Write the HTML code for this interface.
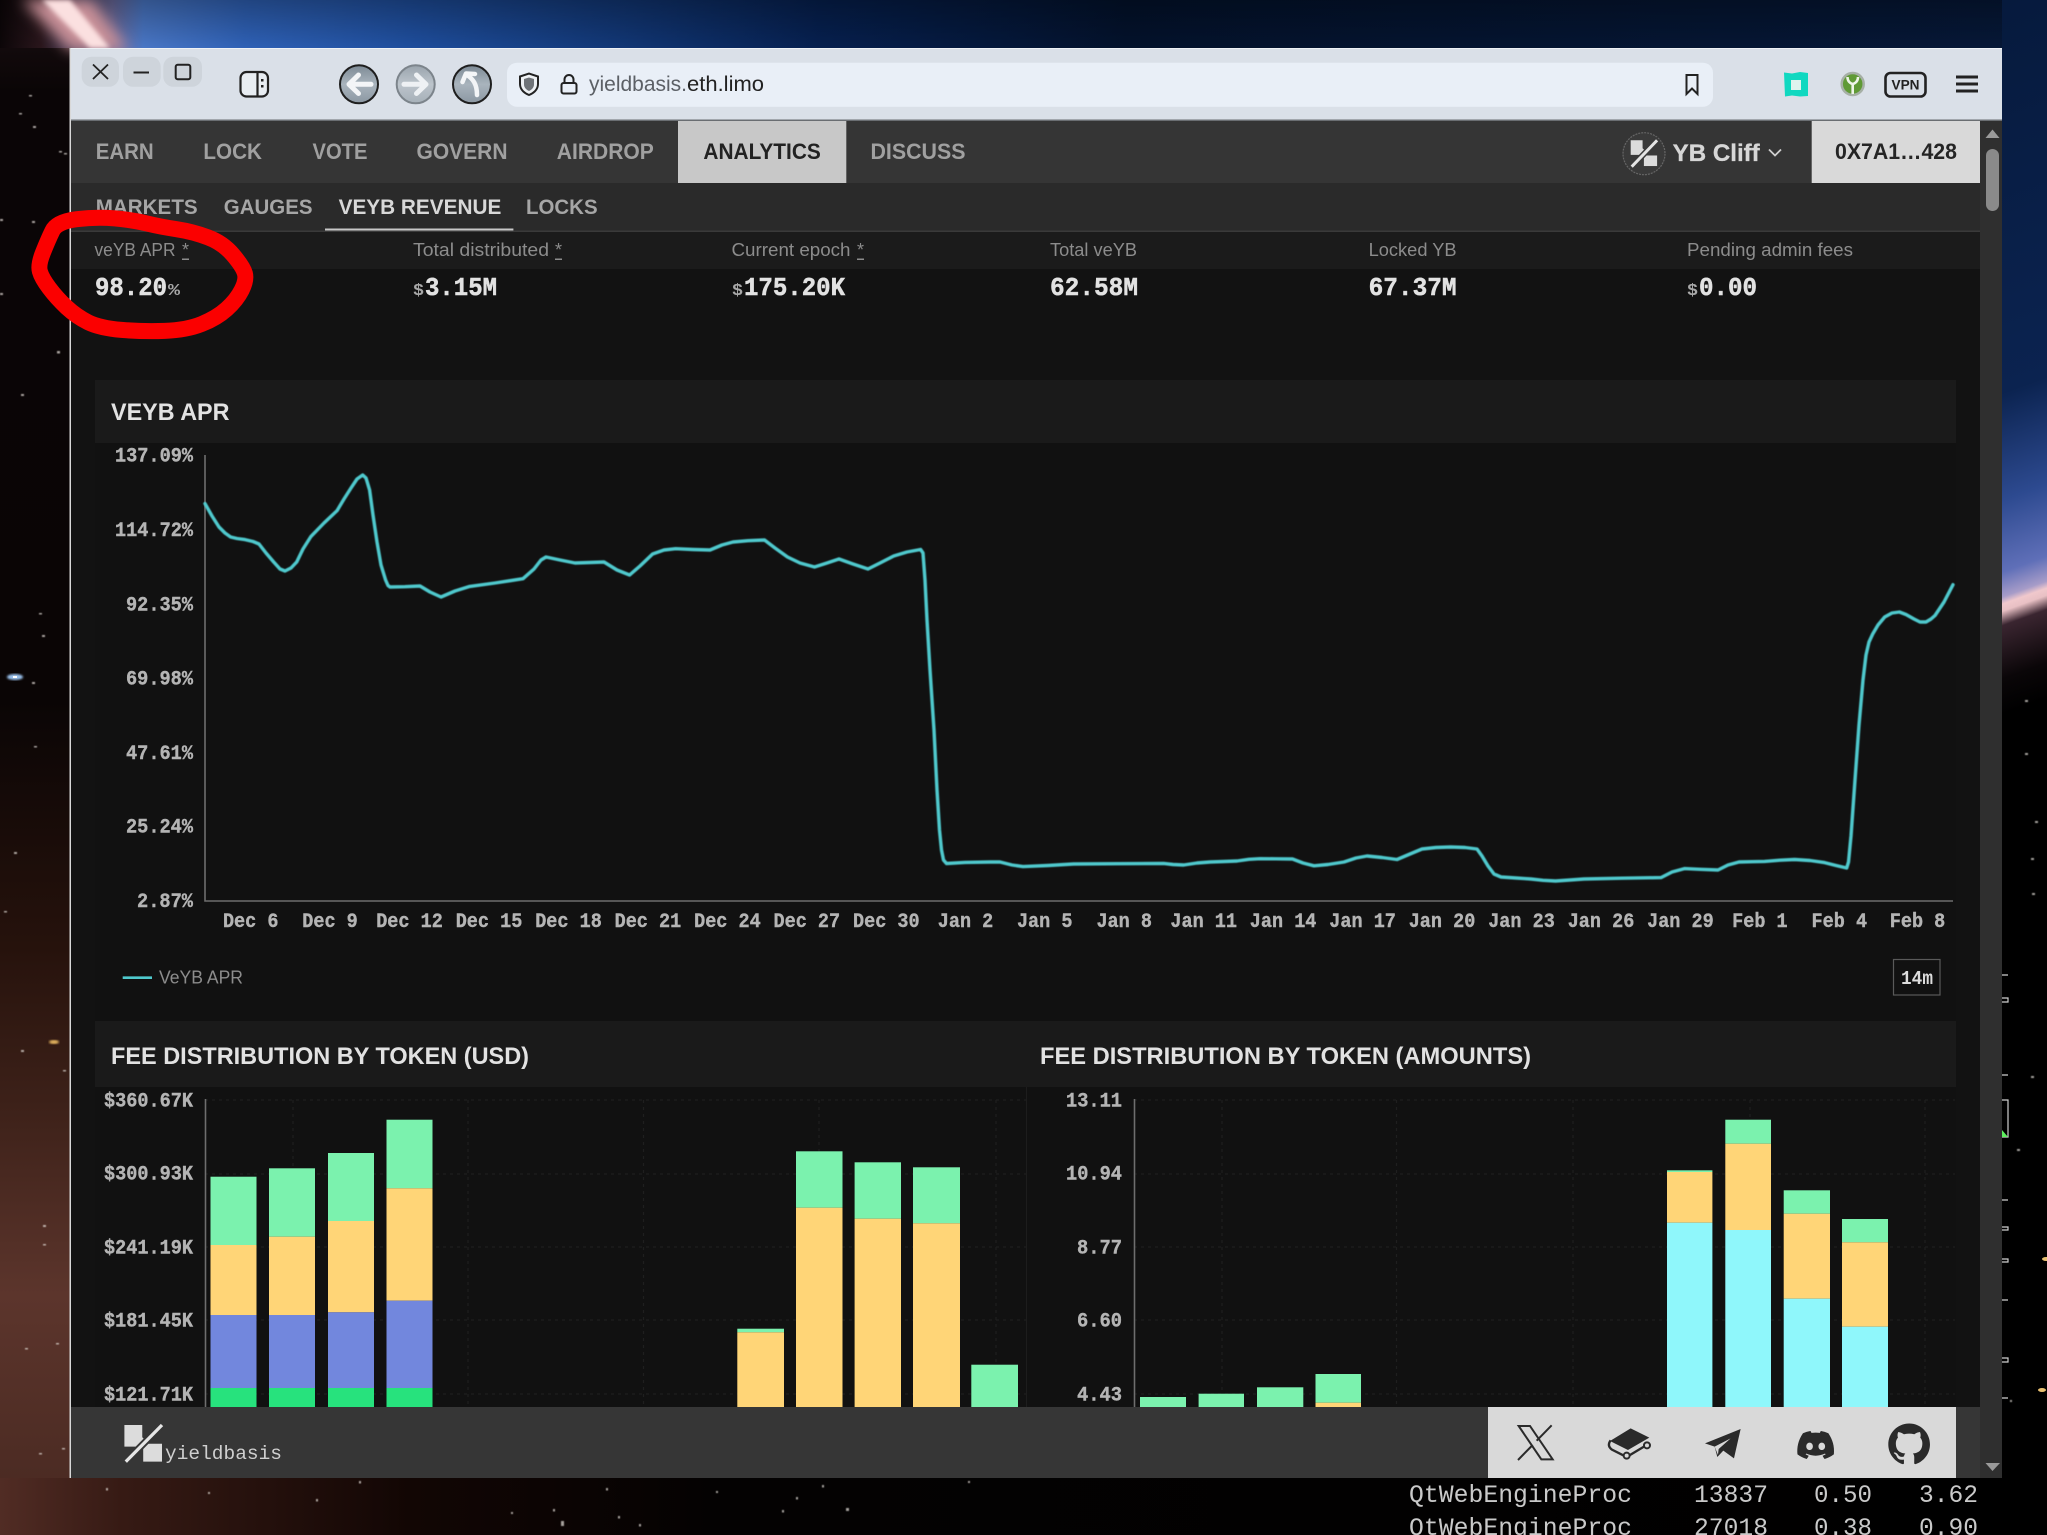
<!DOCTYPE html>
<html><head><meta charset="utf-8"><style>
html,body{margin:0;padding:0;background:#000;width:2047px;height:1535px;overflow:hidden}
svg{display:block;position:absolute;left:0;top:0}
text{white-space:pre}
.s{font-family:"Liberation Sans",sans-serif}
.m{font-family:"Liberation Mono",monospace}
.nav{font-family:"Liberation Sans",sans-serif;font-weight:700;font-size:22px;fill:#a0a0a0}
.sub{font-family:"Liberation Sans",sans-serif;font-weight:700;font-size:21px;fill:#a6a6a6}
.lab{font-family:"Liberation Sans",sans-serif;font-size:18px;fill:#8c8c8c}
.val{font-family:"Liberation Mono",monospace;font-weight:700;font-size:26px;fill:#e2e2e2;stroke:#e2e2e2;stroke-width:.5}
.sm{font-family:"Liberation Mono",monospace;font-weight:700;font-size:17px;fill:#a8a8a8}
.ax{font-family:"Liberation Mono",monospace;font-weight:700;font-size:20.5px;fill:#b4b4b4;stroke:#b4b4b4;stroke-width:.4}
.tt{font-family:"Liberation Sans",sans-serif;font-weight:700;font-size:24px;fill:#e2e2e2}
.tm{font-family:"Liberation Mono",monospace;font-size:25px;fill:#c9c9c9}
</style></head><body>
<svg width="2047" height="1535" viewBox="0 0 2047 1535" xmlns="http://www.w3.org/2000/svg">
<defs>
<linearGradient id="top" x1="0" x2="1" y1="0" y2="0">
<stop offset="0" stop-color="#0c0608"/><stop offset=".02" stop-color="#2a161c"/><stop offset=".055" stop-color="#6a6a9c"/><stop offset=".07" stop-color="#4a78c8"/><stop offset=".12" stop-color="#2f62b8"/><stop offset=".2" stop-color="#1f4f9f"/><stop offset=".3" stop-color="#123878"/><stop offset=".4" stop-color="#062050"/><stop offset=".55" stop-color="#03122c"/><stop offset="1" stop-color="#061838"/>
</linearGradient>
<linearGradient id="topv" x1="0" x2="0" y1="0" y2="1"><stop offset="0" stop-color="#000" stop-opacity=".3"/><stop offset="1" stop-color="#000" stop-opacity="0"/></linearGradient>
<linearGradient id="rs" gradientUnits="userSpaceOnUse" x1="2002" y1="0" x2="2230" y2="633">
<stop offset="0" stop-color="#061a3d"/><stop offset=".55" stop-color="#0b2350"/><stop offset=".7" stop-color="#2d4a90"/><stop offset=".8" stop-color="#5f6fb8"/><stop offset=".835" stop-color="#a79cc8"/><stop offset=".845" stop-color="#f0c8cc"/><stop offset=".855" stop-color="#e8c0c4"/><stop offset=".875" stop-color="#3a2530"/><stop offset=".95" stop-color="#0a0608"/><stop offset="1" stop-color="#000"/>
</linearGradient>
<linearGradient id="ls" x1="0" x2="0" y1="0" y2="1">
<stop offset="0" stop-color="#120a0c"/><stop offset=".03" stop-color="#0a0506"/><stop offset=".45" stop-color="#0a0505"/><stop offset=".62" stop-color="#26120c"/><stop offset=".73" stop-color="#3d2119"/><stop offset=".86" stop-color="#5c352c"/><stop offset="1" stop-color="#4a2a22"/>
</linearGradient>
<linearGradient id="bs" x1="0" x2="1" y1="0" y2="0">
<stop offset="0" stop-color="#512c24"/><stop offset=".06" stop-color="#361a14"/><stop offset=".2" stop-color="#120604"/><stop offset=".35" stop-color="#040202"/><stop offset="1" stop-color="#000"/>
</linearGradient>
<linearGradient id="btn" x1="0" x2="0" y1="0" y2="1"><stop offset="0" stop-color="#7d8a95"/><stop offset=".5" stop-color="#a9b4bd"/><stop offset="1" stop-color="#8b97a2"/></linearGradient>
<linearGradient id="btn2" x1="0" x2="0" y1="0" y2="1"><stop offset="0" stop-color="#9aa4ad"/><stop offset=".5" stop-color="#bcc4cb"/><stop offset="1" stop-color="#a6b0b8"/></linearGradient>
<filter id="b2" x="-50%" y="-50%" width="200%" height="200%"><feGaussianBlur stdDeviation="2.5"/></filter>
<filter id="b1"><feGaussianBlur stdDeviation="1"/></filter>
<filter id="b05" x="-1%" y="-1%" width="102%" height="102%"><feGaussianBlur stdDeviation=".6"/></filter>
<filter id="b6" x="-50%" y="-50%" width="200%" height="200%"><feGaussianBlur stdDeviation="7"/></filter>
<filter id="b04" x="-2%" y="-2%" width="104%" height="104%"><feGaussianBlur stdDeviation=".5"/></filter>
</defs>

<!-- wallpaper -->
<rect width="2047" height="1535" fill="#000"/>
<rect x="0" y="0" width="2047" height="50" fill="url(#top)"/>
<rect x="0" y="0" width="2047" height="50" fill="url(#topv)"/>
<rect x="0" y="48" width="72" height="1450" fill="url(#ls)"/>
<rect x="0" y="1478" width="2047" height="57" fill="url(#bs)"/>
<rect x="2002" y="0" width="45" height="720" fill="url(#rs)"/>
<polygon points="22,0 92,0 128,50 70,50" fill="#c89098" filter="url(#b6)"/>
<polygon points="42,0 70,0 110,48 90,48" fill="#fbe0e0" filter="url(#b2)"/>
<g fill="#e8e4de" opacity=".7" filter="url(#b05)">
<rect x="19" y="113" width="3" height="1.5"/><rect x="33" y="126" width="3" height="2"/><rect x="29" y="95" width="3" height="1.5"/><rect x="59" y="151" width="3" height="1.5"/><rect x="64" y="153" width="3" height="1.5"/><rect x="32" y="221" width="3" height="2"/><rect x="0" y="219" width="3" height="2"/><rect x="57" y="351" width="3" height="2.5"/><rect x="21" y="394" width="3" height="2"/><rect x="0" y="293" width="3" height="2"/><rect x="39" y="613" width="3" height="1.5"/><rect x="42" y="635" width="3" height="2"/><rect x="32" y="682" width="3" height="2"/><rect x="34" y="746" width="3" height="1.5"/><rect x="14" y="852" width="3" height="2"/><rect x="4" y="911" width="3" height="1.5"/><rect x="21" y="1050" width="3" height="2"/><rect x="63" y="1070" width="3" height="1.5"/><rect x="43" y="1225" width="3" height="2"/><rect x="43" y="1244" width="3" height="1.5"/><rect x="25" y="1348" width="3" height="1.5"/><rect x="56" y="1343" width="3" height="1.5"/><rect x="39" y="1453" width="3" height="1.5"/><rect x="62" y="1448" width="3" height="1.5"/>
<rect x="359" y="1481" width="2" height="2.5"/><rect x="106" y="1488" width="2" height="2.5"/><rect x="208" y="1492" width="2" height="2"/><rect x="316" y="1499" width="2" height="2.5"/><rect x="606" y="1488" width="2" height="2.5"/><rect x="822" y="1485" width="2" height="2.5"/><rect x="796" y="1497" width="2" height="2.5"/><rect x="968" y="1481" width="2" height="2"/><rect x="553" y="1509" width="2" height="2.5"/><rect x="511" y="1512" width="2" height="2"/><rect x="561" y="1521" width="3" height="5"/><rect x="618" y="1516" width="2" height="2.5"/><rect x="639" y="1524" width="2" height="2.5"/><rect x="782" y="1510" width="2" height="2.5"/><rect x="846" y="1508" width="3" height="3"/><rect x="716" y="1491" width="2" height="2"/>
<rect x="2025" y="700" width="3" height="2"/><rect x="2025" y="753" width="3" height="2"/><rect x="2035" y="821" width="3" height="2"/><rect x="2031" y="858" width="3" height="2"/><rect x="2032" y="893" width="3" height="2"/><rect x="2041" y="1389" width="3" height="2"/><rect x="2044" y="1258" width="3" height="2"/><rect x="2031" y="1076" width="3" height="2"/><rect x="2017" y="1149" width="3" height="2"/><rect x="2010" y="1400" width="2" height="2"/>
</g>
<ellipse cx="15" cy="677" rx="8" ry="3" fill="#9cc4f0" filter="url(#b1)"/><rect x="13" y="676" width="4" height="2" fill="#fff"/>
<ellipse cx="54" cy="1042" rx="5" ry="2" fill="#e8b860" filter="url(#b1)"/>
<ellipse cx="2046" cy="1259" rx="4" ry="2" fill="#e8c070"/>
<ellipse cx="2042" cy="1390" rx="4" ry="2" fill="#e8c070"/>
<!-- side widget marks -->
<g stroke="#cfcfcf" stroke-width="1.2" fill="none">
<path d="M2002 975h6M2002 1075h6M2002 1200h6M2002 1300h6M2002 1398h6"/>
<path d="M2002 998h6v4h-6M2002 1227h6v3h-6M2002 1259h6v3h-6M2002 1358h6v4h-6"/>
<path d="M2002 1100h6v37h-6"/>
</g>
<polygon points="2002,1130 2008,1137 2002,1137" fill="#5ef05e"/>

<!-- window -->
<rect x="69.5" y="48" width="1.5" height="1430" fill="#d8d8d8"/>
<rect x="71" y="48" width="1931" height="73" fill="#dae0e8"/>
<rect x="71" y="119.5" width="1931" height="2" fill="#6a6e72"/>
<rect x="71" y="48" width="1931" height="1" fill="#eef1f5"/>

<!-- window controls -->
<rect x="81.7" y="56.7" width="37.3" height="30" rx="10" fill="#ced4db"/>
<rect x="123" y="56.7" width="37.7" height="30" rx="10" fill="#ced4db"/>
<rect x="163.3" y="56.7" width="38.7" height="30" rx="10" fill="#ced4db"/>
<path d="M93 64.5L108 79M108 64.5L93 79" stroke="#222" stroke-width="1.8" fill="none"/>
<path d="M133.5 72.5H149" stroke="#222" stroke-width="2" fill="none"/>
<rect x="175.7" y="64.7" width="14.6" height="14.6" rx="2" stroke="#222" stroke-width="2" fill="none"/>
<!-- sidebar icon -->
<rect x="240.5" y="72" width="27.5" height="24.5" rx="6" stroke="#222" stroke-width="2.2" fill="#e8edf2"/>
<path d="M257.5 72V96.5" stroke="#222" stroke-width="2.2"/>
<rect x="261" y="79" width="2.5" height="2.5" fill="#222"/><rect x="261" y="85" width="2.5" height="2.5" fill="#222"/>
<!-- nav buttons -->
<circle cx="359" cy="84.3" r="19" fill="url(#btn)" stroke="#1e1e1e" stroke-width="2"/>
<path d="M371 84.3H351M358.5 75L349 84.3L358.5 93.5" stroke="#f3f5f7" stroke-width="5" stroke-linecap="round" stroke-linejoin="round" fill="none"/>
<circle cx="415.7" cy="84.3" r="19" fill="url(#btn2)" stroke="#7c848b" stroke-width="2"/>
<path d="M404 84.3H424M416.5 75L426 84.3L416.5 93.5" stroke="#eef1f4" stroke-width="5" stroke-linecap="round" stroke-linejoin="round" fill="none"/>
<circle cx="472" cy="84.3" r="19" fill="url(#btn)" stroke="#1e1e1e" stroke-width="2"/>
<path d="M477 95C477 84 473 79 467 75M462.5 82L466 73.5L475 74" stroke="#f3f5f7" stroke-width="4.5" stroke-linecap="round" stroke-linejoin="round" fill="none"/>
<!-- url bar -->
<rect x="507" y="62.7" width="1206" height="44" rx="10" fill="#e9eff7"/>
<path d="M520 76.5L529 73.5L538 76.5V84C538 90 533 93.5 529 95C525 93.5 520 90 520 84Z" fill="#eef1f4" stroke="#222" stroke-width="2"/>
<path d="M524 79L529 77.5L534 79V84.5C534 87.5 531.5 90 529 91C526.5 90 524 87.5 524 84.5Z" fill="#6f7378"/>
<rect x="561.5" y="83" width="15" height="10.5" rx="2" fill="none" stroke="#222" stroke-width="2"/>
<path d="M564.5 83V79.5a4.5 4.5 0 0 1 9 0V83" fill="none" stroke="#222" stroke-width="2"/>
<text class="s" x="589" y="91" font-size="21" fill="#5c6066" textLength="98" lengthAdjust="spacingAndGlyphs">yieldbasis.</text>
<text class="s" x="687" y="91" font-size="21" fill="#222" textLength="77" lengthAdjust="spacingAndGlyphs">eth.limo</text>
<path d="M1686.5 75H1697.5V94L1692 88.5L1686.5 94Z" fill="none" stroke="#222" stroke-width="2"/>
<!-- extensions -->
<path d="M1784 72.5L1792 73.5L1800 72L1808 73V96L1800 96.5L1792 95.5L1785 96.5Z" fill="#10d8c0"/>
<rect x="1791" y="80" width="10" height="10" fill="#dff3ee"/>
<circle cx="1852.7" cy="84" r="11" fill="#5f9a35" stroke="#a6b0a6" stroke-width="2.5"/>
<path d="M1852.7 94V84M1847.5 77C1847.5 83 1852.7 84 1852.7 84C1852.7 84 1858 83 1858 77" stroke="#eef5e8" stroke-width="2.6" fill="none"/>
<rect x="1885.5" y="73" width="40" height="23.5" rx="5" fill="none" stroke="#222" stroke-width="2.6"/>
<text class="s" x="1905.5" y="89.5" font-size="13.5" font-weight="700" fill="#222" text-anchor="middle" textLength="28" lengthAdjust="spacingAndGlyphs">VPN</text>
<path d="M1956 77H1978M1956 84H1978M1956 91H1978" stroke="#222" stroke-width="3"/>

<!-- site -->
<rect x="71" y="121" width="1909" height="1357" fill="#121212"/>
<rect x="71" y="121" width="1909" height="62" fill="#353535"/>
<rect x="71" y="183" width="1909" height="48" fill="#2a2a2a"/>
<rect x="71" y="231" width="1909" height="38" fill="#1b1b1b"/>
<rect x="71" y="230.5" width="1909" height="1.5" fill="#3a3a3a"/>
<rect x="678" y="121" width="168.3" height="62" fill="#c8c8c8"/>
<rect x="1811.7" y="121" width="169" height="62" fill="#d9d9d9"/>
<!-- scrollbar -->
<rect x="1980" y="121" width="22" height="1357" fill="#2f2f2f"/>
<rect x="1986" y="149" width="13" height="62" rx="6.5" fill="#8a8a8a"/>
<polygon points="1992.5,129.5 1985.5,138 1999.5,138" fill="#9a9a9a"/>
<polygon points="1992.5,1471 1985.5,1463 2000,1463" fill="#9a9a9a"/>

<text class="nav" x="95.7" y="159" textLength="58" lengthAdjust="spacingAndGlyphs">EARN</text>
<text class="nav" x="203.4" y="159" textLength="58.5" lengthAdjust="spacingAndGlyphs">LOCK</text>
<text class="nav" x="312.5" y="159" textLength="55" lengthAdjust="spacingAndGlyphs">VOTE</text>
<text class="nav" x="416.5" y="159" textLength="91" lengthAdjust="spacingAndGlyphs">GOVERN</text>
<text class="nav" x="556.8" y="159" textLength="97" lengthAdjust="spacingAndGlyphs">AIRDROP</text>
<text class="nav" x="703.4" y="159" textLength="117.4" lengthAdjust="spacingAndGlyphs" style="fill:#222">ANALYTICS</text>
<text class="nav" x="870.5" y="159" textLength="95" lengthAdjust="spacingAndGlyphs">DISCUSS</text>

<text class="sub" x="95.7" y="214" textLength="102" lengthAdjust="spacingAndGlyphs">MARKETS</text>
<text class="sub" x="223.8" y="214" textLength="88.7" lengthAdjust="spacingAndGlyphs">GAUGES</text>
<text class="sub" x="338.6" y="214" textLength="162.7" lengthAdjust="spacingAndGlyphs" style="fill:#d8d8d8">VEYB REVENUE</text>
<text class="sub" x="526" y="214" textLength="71.6" lengthAdjust="spacingAndGlyphs">LOCKS</text>
<rect x="325" y="228.5" width="188.4" height="2" fill="#c8c8c8"/>

<!-- header right -->
<circle cx="1644" cy="153.7" r="21" fill="#3a3a3a" stroke="#666" stroke-width="1.2" stroke-dasharray="2 1"/>
<g transform="translate(1630.7,140.3) scale(.33)" fill="#dcdcdc">
<path d="M0 0H36V24L48 36L40 44H0Z"/><path d="M40 46H80V78H40Z"/><path d="M84 -4L-1 84" stroke="#3a3a3a" stroke-width="18" fill="none"/><path d="M80 0L3 80" stroke="#e4e4e4" stroke-width="9" fill="none"/>
</g>
<text class="s" x="1672.7" y="161" font-size="24" font-weight="700" fill="#d6d6d6" stroke="#d6d6d6" stroke-width=".3" textLength="87" lengthAdjust="spacingAndGlyphs">YB Cliff</text>
<path d="M1769 149.5L1775 155.5L1781 149.5" stroke="#cfcfcf" stroke-width="1.8" fill="none"/>
<text class="s" x="1835" y="159" font-size="22.5" font-weight="700" fill="#252525" textLength="122" lengthAdjust="spacingAndGlyphs">0X7A1…428</text>

<!-- stats -->
<text class="lab" x="94.5" y="256" textLength="81" lengthAdjust="spacingAndGlyphs">veYB APR</text>
<text class="lab" x="182" y="256">*</text><rect x="182" y="258.5" width="7" height="1.5" fill="#8c8c8c"/>
<text class="lab" x="413" y="256" textLength="136" lengthAdjust="spacingAndGlyphs">Total distributed</text>
<text class="lab" x="555" y="256">*</text><rect x="555" y="258.5" width="7" height="1.5" fill="#8c8c8c"/>
<text class="lab" x="731.5" y="256" textLength="119" lengthAdjust="spacingAndGlyphs">Current epoch</text>
<text class="lab" x="857" y="256">*</text><rect x="857" y="258.5" width="7" height="1.5" fill="#8c8c8c"/>
<text class="lab" x="1050" y="256" textLength="87" lengthAdjust="spacingAndGlyphs">Total veYB</text>
<text class="lab" x="1368.6" y="256" textLength="88" lengthAdjust="spacingAndGlyphs">Locked YB</text>
<text class="lab" x="1687" y="256" textLength="166" lengthAdjust="spacingAndGlyphs">Pending admin fees</text>

<text class="val" x="95" y="295" textLength="72" lengthAdjust="spacingAndGlyphs">98.20</text><text class="sm" x="168" y="295" textLength="12" lengthAdjust="spacingAndGlyphs">%</text>
<text class="sm" x="413" y="295" textLength="11" lengthAdjust="spacingAndGlyphs">$</text><text class="val" x="425" y="295" textLength="72" lengthAdjust="spacingAndGlyphs">3.15M</text>
<text class="sm" x="732" y="295" textLength="11" lengthAdjust="spacingAndGlyphs">$</text><text class="val" x="744" y="295" textLength="101" lengthAdjust="spacingAndGlyphs">175.20K</text>
<text class="val" x="1050" y="295" textLength="88" lengthAdjust="spacingAndGlyphs">62.58M</text>
<text class="val" x="1368.6" y="295" textLength="88" lengthAdjust="spacingAndGlyphs">67.37M</text>
<text class="sm" x="1687" y="295" textLength="11" lengthAdjust="spacingAndGlyphs">$</text><text class="val" x="1699" y="295" textLength="58" lengthAdjust="spacingAndGlyphs">0.00</text>

<!-- section 1 -->
<rect x="95" y="380" width="1861" height="63" fill="#1a1a1a"/>
<rect x="95" y="443" width="1861" height="578" fill="#111"/>
<text class="tt" x="111" y="420" textLength="118.5" lengthAdjust="spacingAndGlyphs">VEYB APR</text>
<path d="M205 455V901H1953" stroke="#6e6e6e" stroke-width="1.6" fill="none"/>
<g class="ax" text-anchor="end">
<text x="193" y="461.6" textLength="78" lengthAdjust="spacingAndGlyphs">137.09%</text>
<text x="193" y="536" textLength="78" lengthAdjust="spacingAndGlyphs">114.72%</text>
<text x="193" y="610.4" textLength="67" lengthAdjust="spacingAndGlyphs">92.35%</text>
<text x="193" y="684.7" textLength="67" lengthAdjust="spacingAndGlyphs">69.98%</text>
<text x="193" y="759" textLength="67" lengthAdjust="spacingAndGlyphs">47.61%</text>
<text x="193" y="832.4" textLength="67" lengthAdjust="spacingAndGlyphs">25.24%</text>
<text x="193" y="907" textLength="56" lengthAdjust="spacingAndGlyphs">2.87%</text>
</g>
<g class="ax" text-anchor="middle">
<text x="250.7" y="927" textLength="55.5" lengthAdjust="spacingAndGlyphs">Dec 6</text>
<text x="330" y="927" textLength="55.5" lengthAdjust="spacingAndGlyphs">Dec 9</text>
<text x="409.5" y="927" textLength="66.6" lengthAdjust="spacingAndGlyphs">Dec 12</text>
<text x="489" y="927" textLength="66.6" lengthAdjust="spacingAndGlyphs">Dec 15</text>
<text x="568.5" y="927" textLength="66.6" lengthAdjust="spacingAndGlyphs">Dec 18</text>
<text x="647.9" y="927" textLength="66.6" lengthAdjust="spacingAndGlyphs">Dec 21</text>
<text x="727.4" y="927" textLength="66.6" lengthAdjust="spacingAndGlyphs">Dec 24</text>
<text x="806.8" y="927" textLength="66.6" lengthAdjust="spacingAndGlyphs">Dec 27</text>
<text x="886.3" y="927" textLength="66.6" lengthAdjust="spacingAndGlyphs">Dec 30</text>
<text x="965.5" y="927" textLength="55.5" lengthAdjust="spacingAndGlyphs">Jan 2</text>
<text x="1044.7" y="927" textLength="55.5" lengthAdjust="spacingAndGlyphs">Jan 5</text>
<text x="1124.2" y="927" textLength="55.5" lengthAdjust="spacingAndGlyphs">Jan 8</text>
<text x="1203.7" y="927" textLength="66.6" lengthAdjust="spacingAndGlyphs">Jan 11</text>
<text x="1283.1" y="927" textLength="66.6" lengthAdjust="spacingAndGlyphs">Jan 14</text>
<text x="1362.6" y="927" textLength="66.6" lengthAdjust="spacingAndGlyphs">Jan 17</text>
<text x="1442" y="927" textLength="66.6" lengthAdjust="spacingAndGlyphs">Jan 20</text>
<text x="1521.5" y="927" textLength="66.6" lengthAdjust="spacingAndGlyphs">Jan 23</text>
<text x="1601" y="927" textLength="66.6" lengthAdjust="spacingAndGlyphs">Jan 26</text>
<text x="1680.4" y="927" textLength="66.6" lengthAdjust="spacingAndGlyphs">Jan 29</text>
<text x="1759.9" y="927" textLength="55.5" lengthAdjust="spacingAndGlyphs">Feb 1</text>
<text x="1839.3" y="927" textLength="55.5" lengthAdjust="spacingAndGlyphs">Feb 4</text>
<text x="1917.5" y="927" textLength="55.5" lengthAdjust="spacingAndGlyphs">Feb 8</text>
</g>
<polyline filter="url(#b04)" fill="none" stroke="#4fc9cd" stroke-width="3.4" stroke-linejoin="round" stroke-linecap="round" points="205,503.6 212,516 219,527 225,533 230.6,537 237,538.5 245,539.6 253,541.5 259,544 266,553 273.7,562 280,569 285,571 291,568 296.7,562 303,549 311,536.4 324,523 337,510.7 344,499 351,488 357,479 362.7,475 366,478 369.6,490 373,515 377,542 381,565 385.6,580 388,585.5 390,587 405,586.7 420,586 430,592 441,597 455,591 469,586.6 495,583 523,578.7 534,569 541,560 546,557 560,560 575,563 590,562.5 604,562 617,570 629.6,575 640,566 652.6,554 664,550 675.6,548.7 693,549.5 710,550 722,545 733,542 748,540.7 764.5,540 775,548 787.5,557 800,563 814.5,567 827,563 839,559 853,564 868,569 880,563 893.7,556 907,552 920.6,549.5 923,553 925,580 927,620 930,670 934,730 937,790 939.5,830 941.5,850 943.5,860 946.5,863.5 965,862.4 990,862 1000,862 1012,865 1023,866.6 1048,865.5 1073.5,864 1118,863.7 1163.6,863.4 1173,864.5 1183.6,865 1197,863 1210,862 1224,861.5 1237,861 1249,859.3 1260,858.7 1276,858.8 1292.5,859 1303,863 1314,865.8 1328,864.5 1344,862 1356,858 1367,856 1382,857.5 1397,859.5 1410,854 1422,849 1436,847.5 1450.7,847 1465,847.5 1477,849 1482,856 1488,866 1494,874 1501,877 1516,878 1531,879 1543,880.3 1555.5,881 1570,880 1584,879 1622,878.2 1661,877.6 1672,872 1684.4,868.6 1700,869.3 1718,870 1728,865 1739,862 1752,861.7 1764.6,861.4 1780,860.2 1794.6,859.5 1810,860.5 1824.6,862.6 1836,865.5 1846.7,868 1848.5,862 1851,836 1855,780 1859,725 1863,680 1866,655 1869,642 1872.7,634 1878,625 1884.7,617 1892,613 1899.4,612 1906,614.5 1914,619 1920,622 1926,622 1931,619 1935,615.5 1944,602 1953,584.7"/>
<path d="M122.7 977.7H152" stroke="#4fc9cd" stroke-width="2.6"/>
<text class="lab" x="159" y="983.6" textLength="84" lengthAdjust="spacingAndGlyphs">VeYB APR</text>
<rect x="1893.5" y="959.5" width="46.5" height="35.5" fill="none" stroke="#5a5a5a" stroke-width="1.2"/>
<text class="m" x="1901" y="984" font-size="19" font-weight="700" fill="#dcdcdc" textLength="32" lengthAdjust="spacingAndGlyphs">14m</text>

<!-- section 2 -->
<rect x="95" y="1021" width="1861" height="66" fill="#1a1a1a"/>
<rect x="95" y="1087" width="1861" height="320" fill="#111"/>
<rect x="1026" y="1087" width="1" height="320" fill="#1d1d1d"/>
<text class="tt" x="111" y="1064" textLength="418" lengthAdjust="spacingAndGlyphs">FEE DISTRIBUTION BY TOKEN (USD)</text>
<text class="tt" x="1040" y="1064" textLength="491" lengthAdjust="spacingAndGlyphs">FEE DISTRIBUTION BY TOKEN (AMOUNTS)</text>
<g stroke="#1f1f1f" stroke-width="1.2" stroke-dasharray="3 4" fill="none">
<path d="M205 1100H1026M205 1174H1026M205 1247H1026M205 1320H1026M205 1394H1026"/>
<path d="M1134 1100H1955M1134 1174H1955M1134 1247H1955M1134 1320H1955M1134 1394H1955"/>
<path d="M293 1100V1407M468 1100V1407M643.5 1100V1407M819 1100V1407M996 1100V1407"/>
<path d="M1222 1100V1407M1396.5 1100V1407M1573 1100V1407M1750 1100V1407M1925 1100V1407"/>
</g>
<path d="M205.5 1099V1407" stroke="#6e6e6e" stroke-width="1.6"/>
<path d="M1134.5 1099V1407" stroke="#6e6e6e" stroke-width="1.6"/>
<g class="ax" text-anchor="end">
<text x="193" y="1106.7" textLength="89" lengthAdjust="spacingAndGlyphs">$360.67K</text>
<text x="193" y="1179.7" textLength="89" lengthAdjust="spacingAndGlyphs">$300.93K</text>
<text x="193" y="1253.7" textLength="89" lengthAdjust="spacingAndGlyphs">$241.19K</text>
<text x="193" y="1326.7" textLength="89" lengthAdjust="spacingAndGlyphs">$181.45K</text>
<text x="193" y="1400.7" textLength="89" lengthAdjust="spacingAndGlyphs">$121.71K</text>
<text x="1122" y="1106.7" textLength="56" lengthAdjust="spacingAndGlyphs">13.11</text>
<text x="1122" y="1179.7" textLength="56" lengthAdjust="spacingAndGlyphs">10.94</text>
<text x="1122" y="1253.7" textLength="45" lengthAdjust="spacingAndGlyphs">8.77</text>
<text x="1122" y="1326.7" textLength="45" lengthAdjust="spacingAndGlyphs">6.60</text>
<text x="1122" y="1400.7" textLength="45" lengthAdjust="spacingAndGlyphs">4.43</text>
</g>
<!-- bars left -->
<g>
<rect x="210.5" y="1176.7" width="46" height="68.3" fill="#7bf2ae"/><rect x="210.5" y="1245" width="46" height="70" fill="#ffd577"/><rect x="210.5" y="1315" width="46" height="73" fill="#7287dd"/><rect x="210.5" y="1388" width="46" height="19" fill="#27e27d"/>
<rect x="269" y="1168.3" width="46" height="68.4" fill="#7bf2ae"/><rect x="269" y="1236.7" width="46" height="78.3" fill="#ffd577"/><rect x="269" y="1315" width="46" height="73" fill="#7287dd"/><rect x="269" y="1388" width="46" height="19" fill="#27e27d"/>
<rect x="328" y="1153" width="46" height="68" fill="#7bf2ae"/><rect x="328" y="1221" width="46" height="91.3" fill="#ffd577"/><rect x="328" y="1312.3" width="46" height="75.7" fill="#7287dd"/><rect x="328" y="1388" width="46" height="19" fill="#27e27d"/>
<rect x="386.5" y="1119.7" width="46" height="68.6" fill="#7bf2ae"/><rect x="386.5" y="1188.3" width="46" height="112.4" fill="#ffd577"/><rect x="386.5" y="1300.7" width="46" height="87.3" fill="#7287dd"/><rect x="386.5" y="1388" width="46" height="19" fill="#27e27d"/>
<rect x="737.3" y="1328.7" width="46.7" height="3.6" fill="#7bf2ae"/><rect x="737.3" y="1332.3" width="46.7" height="74.7" fill="#ffd577"/>
<rect x="796" y="1151.3" width="46.5" height="56.4" fill="#7bf2ae"/><rect x="796" y="1207.7" width="46.5" height="199.3" fill="#ffd577"/>
<rect x="854.6" y="1162.3" width="46.4" height="56.4" fill="#7bf2ae"/><rect x="854.6" y="1218.7" width="46.4" height="188.3" fill="#ffd577"/>
<rect x="913" y="1167.3" width="47" height="56" fill="#7bf2ae"/><rect x="913" y="1223.3" width="47" height="183.7" fill="#ffd577"/>
<rect x="971.3" y="1364.7" width="46.7" height="42.3" fill="#7bf2ae"/>
</g>
<!-- bars right -->
<g>
<rect x="1140" y="1397" width="46" height="10" fill="#7bf2ae"/>
<rect x="1198.6" y="1393.7" width="45.4" height="13.3" fill="#7bf2ae"/>
<rect x="1257" y="1387.3" width="46.3" height="19.7" fill="#7bf2ae"/>
<rect x="1315.5" y="1374" width="45.5" height="28.7" fill="#7bf2ae"/><rect x="1315.5" y="1402.7" width="45.5" height="4.3" fill="#ffd577"/>
<rect x="1667" y="1170.3" width="45.4" height="1.7" fill="#7bf2ae"/><rect x="1667" y="1172" width="45.4" height="50.7" fill="#ffd577"/><rect x="1667" y="1222.7" width="45.4" height="184.3" fill="#8ff7fb"/>
<rect x="1725.3" y="1119.7" width="45.7" height="24" fill="#7bf2ae"/><rect x="1725.3" y="1143.7" width="45.7" height="86.3" fill="#ffd577"/><rect x="1725.3" y="1230" width="45.7" height="177" fill="#8ff7fb"/>
<rect x="1783.7" y="1190.3" width="46.3" height="23.4" fill="#7bf2ae"/><rect x="1783.7" y="1213.7" width="46.3" height="85" fill="#ffd577"/><rect x="1783.7" y="1298.7" width="46.3" height="108.3" fill="#8ff7fb"/>
<rect x="1842" y="1219" width="46" height="23.3" fill="#7bf2ae"/><rect x="1842" y="1242.3" width="46" height="84.4" fill="#ffd577"/><rect x="1842" y="1326.7" width="46" height="80.3" fill="#8ff7fb"/>
</g>

<!-- footer -->
<rect x="71" y="1407" width="1909" height="71" fill="#363636"/>
<rect x="1488" y="1407" width="468" height="71" fill="#d9d9d9"/>
<g transform="translate(124.4,1425) scale(.47)" fill="#dcdcdc">
<path d="M0 0H38V26L50 38L42 46H0Z"/><path d="M40 40H80V78H40Z"/><path d="M84 -4L-1 82" stroke="#363636" stroke-width="15" fill="none"/><path d="M80 0L3 78" stroke="#e6e6e6" stroke-width="7" fill="none"/>
</g>
<text class="m" x="165" y="1459" font-size="19.5" fill="#cfcfcf" textLength="117" lengthAdjust="spacingAndGlyphs">yieldbasis</text>
<!-- icons drawn in 3x local coordinates -->
<g transform="translate(1480,1405) scale(.3333)">
<!-- X -->
<path d="M116 63H150L218 163H184Z" fill="none" stroke="#2a2a2a" stroke-width="6"/>
<path d="M215 61L170 107M158 120L114 165" fill="none" stroke="#2a2a2a" stroke-width="6"/>
<!-- book -->
<path d="M390 108L452 70L508 98L444 135Z" fill="#2a2a2a"/>
<path d="M392 106Q380 122 396 134L432 152M450 150L492 125" stroke="#2a2a2a" stroke-width="7" fill="none"/>
<circle cx="440" cy="152" r="9" fill="#d9d9d9" stroke="#2a2a2a" stroke-width="6"/>
<circle cx="501" cy="121" r="9" fill="#d9d9d9" stroke="#2a2a2a" stroke-width="6"/>
<!-- telegram -->
<path d="M782 72L675 115L704 125L712 156L730 137L762 160Z" fill="#2a2a2a"/>
<path d="M704 125L752 100L716 132L714 150Z" fill="#d9d9d9"/>
</g>
<!-- discord -->
<g transform="translate(1797.3,1426.6) scale(1.53)" fill="#2a2a2a"><path d="M20.317 4.37a19.791 19.791 0 0 0-4.885-1.515.074.074 0 0 0-.079.037c-.21.375-.444.864-.608 1.25a18.27 18.27 0 0 0-5.487 0 12.64 12.64 0 0 0-.617-1.25.077.077 0 0 0-.079-.037A19.736 19.736 0 0 0 3.677 4.37a.07.07 0 0 0-.032.027C.533 9.046-.32 13.58.099 18.057a.082.082 0 0 0 .031.057 19.9 19.9 0 0 0 5.993 3.03.078.078 0 0 0 .084-.028c.462-.63.874-1.295 1.226-1.994a.076.076 0 0 0-.041-.106 13.107 13.107 0 0 1-1.872-.892.077.077 0 0 1-.008-.128 10.2 10.2 0 0 0 .372-.292.074.074 0 0 1 .077-.01c3.928 1.793 8.18 1.793 12.062 0a.074.074 0 0 1 .078.01c.12.098.246.198.373.292a.077.077 0 0 1-.006.127 12.299 12.299 0 0 1-1.873.892.077.077 0 0 0-.041.107c.36.698.772 1.362 1.225 1.993a.076.076 0 0 0 .084.028 19.839 19.839 0 0 0 6.002-3.03.077.077 0 0 0 .032-.054c.5-5.177-.838-9.674-3.549-13.66a.061.061 0 0 0-.031-.03zM8.02 15.33c-1.183 0-2.157-1.085-2.157-2.419 0-1.333.956-2.419 2.157-2.419 1.21 0 2.176 1.096 2.157 2.42 0 1.333-.956 2.418-2.157 2.418zm7.975 0c-1.183 0-2.157-1.085-2.157-2.419 0-1.333.955-2.419 2.157-2.419 1.21 0 2.176 1.096 2.157 2.42 0 1.333-.946 2.418-2.157 2.418z"/></g>
<!-- github -->
<g transform="translate(1888.3,1423) scale(1.736)" fill="#2a2a2a"><path d="M12 .297c-6.63 0-12 5.373-12 12 0 5.303 3.438 9.8 8.205 11.385.6.113.82-.258.82-.577 0-.285-.01-1.04-.015-2.04-3.338.724-4.042-1.61-4.042-1.61C4.422 18.07 3.633 17.7 3.633 17.7c-1.087-.744.084-.729.084-.729 1.205.084 1.838 1.236 1.838 1.236 1.07 1.835 2.809 1.305 3.495.998.108-.776.417-1.305.76-1.605-2.665-.3-5.466-1.332-5.466-5.93 0-1.31.465-2.38 1.235-3.22-.135-.303-.54-1.523.105-3.176 0 0 1.005-.322 3.3 1.23.96-.267 1.98-.399 3-.405 1.02.006 2.04.138 3 .405 2.28-1.552 3.285-1.23 3.285-1.23.645 1.653.24 2.873.12 3.176.765.84 1.23 1.91 1.23 3.22 0 4.61-2.805 5.625-5.475 5.92.42.36.81 1.096.81 2.22 0 1.606-.015 2.896-.015 3.286 0 .315.21.69.825.57C20.565 22.092 24 17.592 24 12.297c0-6.627-5.373-12-12-12"/></g>

<!-- terminal -->
<g class="tm">
<text x="1409" y="1502" textLength="223" lengthAdjust="spacingAndGlyphs">QtWebEngineProc</text>
<text x="1694" y="1502" textLength="74" lengthAdjust="spacingAndGlyphs">13837</text>
<text x="1814" y="1502" textLength="58" lengthAdjust="spacingAndGlyphs">0.50</text>
<text x="1919" y="1502" textLength="59" lengthAdjust="spacingAndGlyphs">3.62</text>
<text x="1409" y="1535" textLength="223" lengthAdjust="spacingAndGlyphs">QtWebEngineProc</text>
<text x="1694" y="1535" textLength="74" lengthAdjust="spacingAndGlyphs">27018</text>
<text x="1814" y="1535" textLength="58" lengthAdjust="spacingAndGlyphs">0.38</text>
<text x="1919" y="1535" textLength="59" lengthAdjust="spacingAndGlyphs">0.90</text>
</g>

<!-- red scribble -->
<path d="M76.7,219.2 Q96.7,216.7 114.9,218.4 Q133,220 146.5,223.4 Q160,226.7 176.5,229.2 Q193,231.7 208,237.4 Q223,243 233,254.9 Q243,266.7 244.9,273.4 Q246.7,280 241.7,290 Q236.7,300 226.7,309 Q216.7,318 201.7,324 Q186.7,330 164.9,330.9 Q143,331.7 121.5,329.9 Q100,328 88.4,322.4 Q76.7,316.7 66.7,307.4 Q56.7,298 49.2,288 Q41.7,278 39.9,271.5 Q38,265 43,252.5 Q48,240 52.4,230.9 Q56.7,221.7 76.7,219.2Z" fill="none" stroke="#fb0000" stroke-width="16" stroke-linejoin="round"/>
</svg>
</body></html>
